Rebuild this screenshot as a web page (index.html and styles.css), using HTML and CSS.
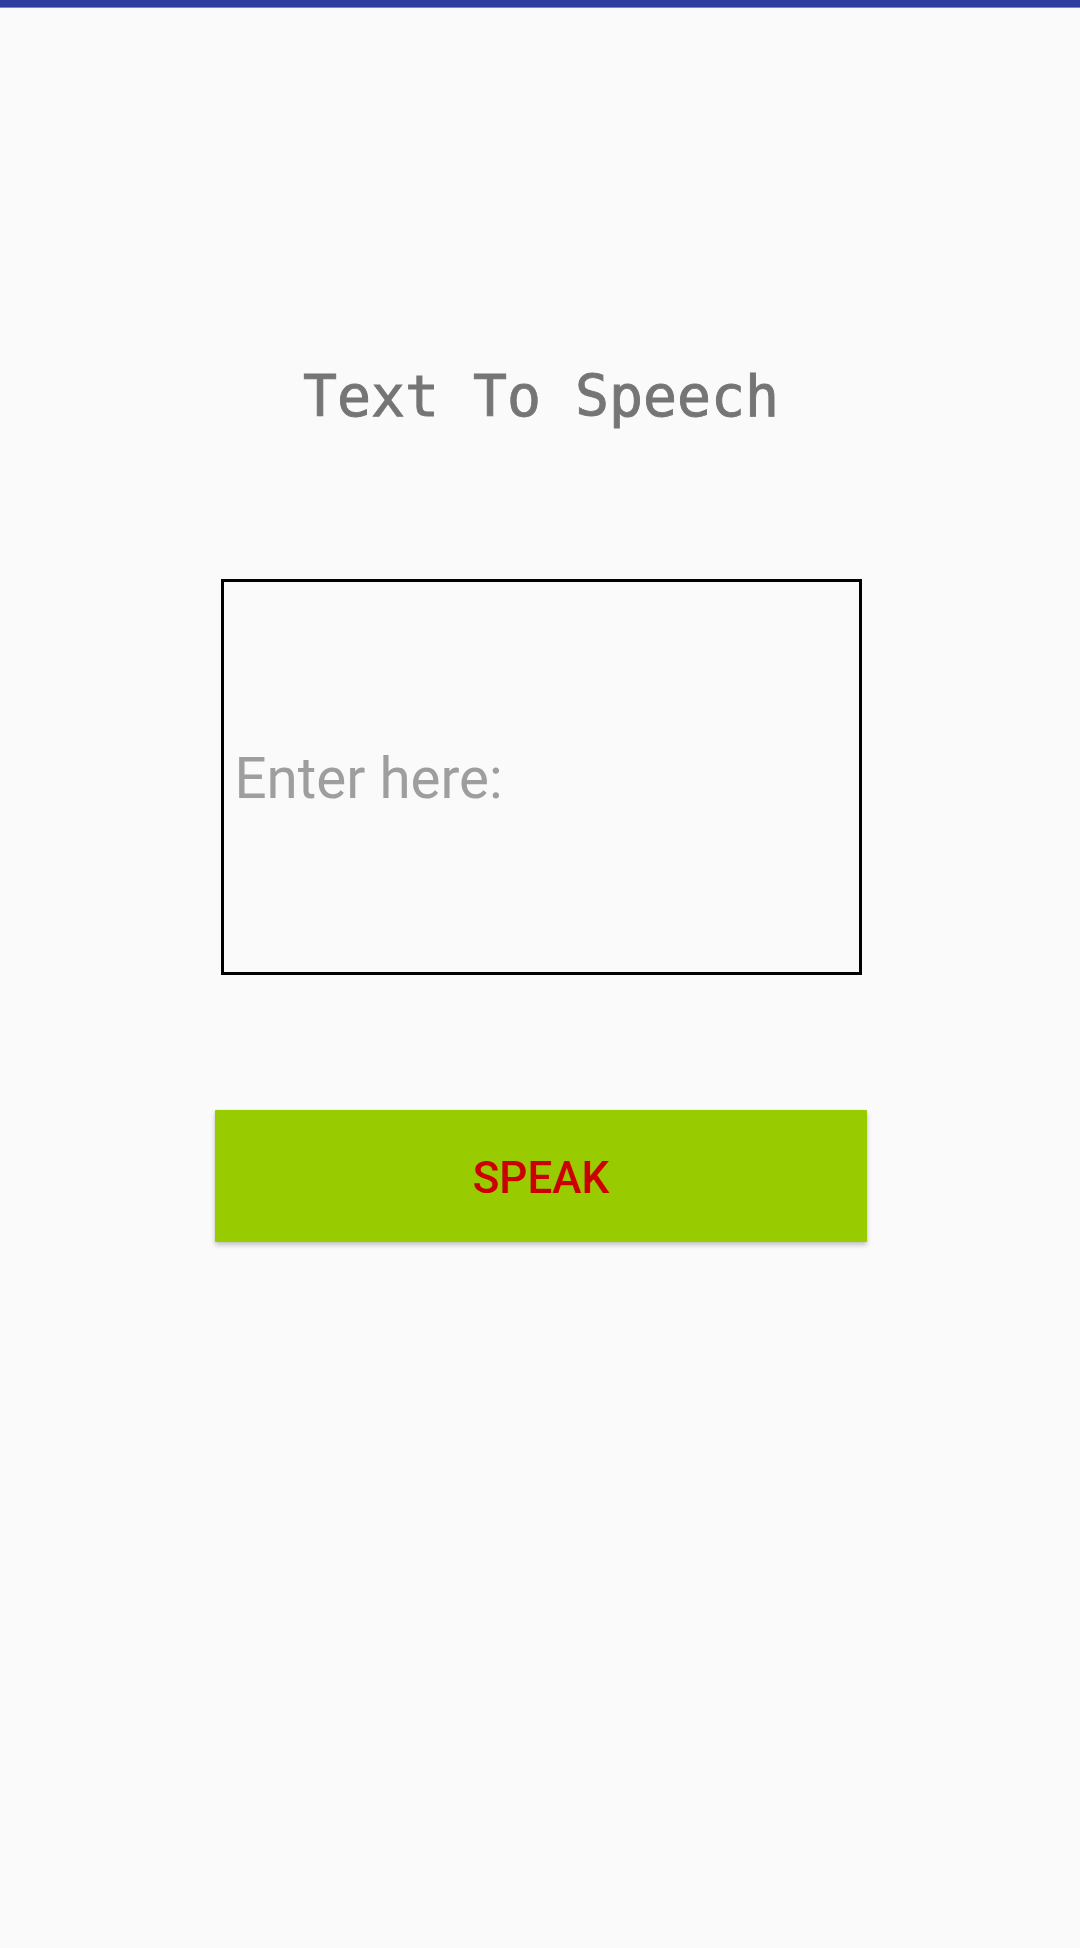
FILE: index.html
```html
<!DOCTYPE html>
<html>
<head>
<meta charset="utf-8">
<title>Text To Speech</title>
<link rel="stylesheet" href="styles.css">
</head>
<body>
<div class="status-bar"></div>
<main class="screen">
  <h1 class="title">Text To Speech</h1>
  <div class="input-box">
    <span class="placeholder">Enter here:</span>
  </div>
  <button class="speak-btn">Speak</button>
</main>
</body>
</html>
```

FILE: styles.css
```css
html, body {
  margin: 0;
  padding: 0;
  background: #fafafa;
  width: 1080px;
  height: 1948px;
  overflow: hidden;
}

.status-bar {
  height: 7px;
  background: #303f9f;
  border-bottom: 1px solid #7d86c4;
}

.screen {
  display: flex;
  flex-direction: column;
  align-items: center;
  padding-left: 2px;
}

.title {
  margin: 356px 0 0 0;
  font-family: "DejaVu Sans Mono", "Liberation Mono", monospace;
  font-weight: normal;
  font-size: 56.5px;
  line-height: 66px;
  color: #757575;
  -webkit-text-stroke: 0.9px #757575;
}

.input-box {
  margin-top: 149px;
  box-sizing: border-box;
  width: 641px;
  height: 396px;
  border: 3px solid #000;
  display: flex;
  align-items: center;
  padding: 4px 0 0 11px;
}

.placeholder {
  font-family: Roboto, "Noto Sans", sans-serif;
  font-size: 56.5px;
  color: #9e9e9e;
}

.speak-btn {
  margin-top: 135px;
  width: 652px;
  height: 132px;
  border: none;
  border-radius: 1px;
  background: #99cc00;
  color: #cc0000;
  font-family: Roboto, "Noto Sans", sans-serif;
  font-weight: 500;
  font-size: 44px;
  text-transform: uppercase;
  padding: 4px 0 0 0;
  box-shadow: 0 3px 5px rgba(0, 0, 0, 0.22), 0 0 2px rgba(0, 0, 0, 0.08);
}
```
